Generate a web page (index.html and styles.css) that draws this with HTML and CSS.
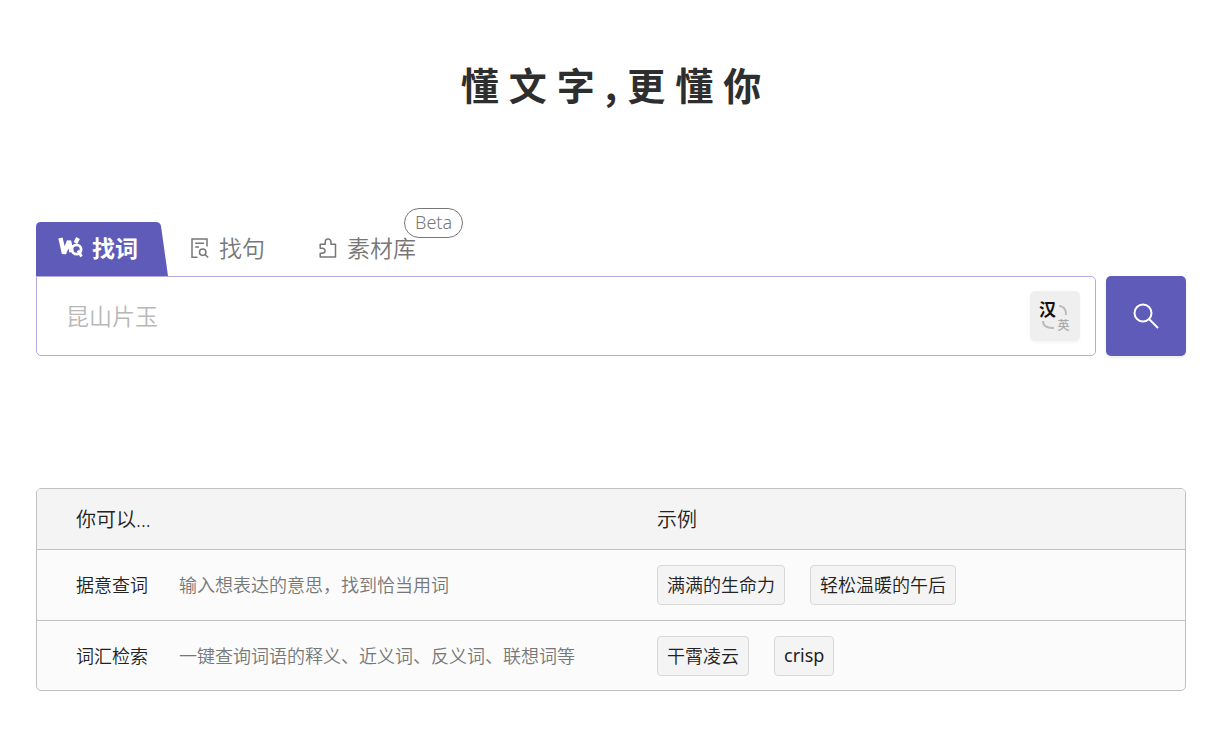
FILE: index.html
```html
<!DOCTYPE html>
<html lang="zh-CN">
<head>
<meta charset="utf-8">
<title>懂文字,更懂你</title>
<link rel="stylesheet" href="styles.css">
</head>
<body>
<main class="page">
  <h1 class="slogan">懂文字,更懂你</h1>

  <nav class="tabs">
    <button class="tab tab-active" type="button">
      <svg class="tab-shape" viewBox="0 0 132 54" preserveAspectRatio="none" aria-hidden="true"><path d="M0 54V5Q0 0 5 0H120Q124 0 125 4L132 54Z" fill="#5f5cb9"/></svg>
      <svg class="logo" viewBox="0 0 26 22" fill="none" stroke="#fff" aria-hidden="true">
        <path d="M2.500 1L6 16.500L11 4L13.500 15" stroke-width="4.400" stroke-linejoin="bevel"/>
        <path d="M20 1L17.500 6" stroke-width="4"/>
        <circle cx="18.500" cy="12.500" r="4.600" stroke-width="2.800"/>
        <path d="M20 13.500L23.500 19.500" stroke-width="2.800"/>
      </svg>
      <span>找词</span>
    </button>
    <button class="tab" type="button">
      <svg class="icon" viewBox="0 0 18 20" fill="none" stroke="#777" stroke-width="1.500" aria-hidden="true">
        <path d="M6.500 19.200H1V1H16V8.500M4.200 5.300H13M4.200 9H8"/>
        <circle cx="11.700" cy="14.200" r="3.200"/>
        <path d="M14 16.500L17.200 19.500"/>
      </svg>
      <span>找句</span>
    </button>
    <button class="tab tab-library" type="button">
      <svg class="icon" viewBox="0 0 18 20" fill="none" stroke="#777" stroke-width="1.500" stroke-linejoin="round" aria-hidden="true">
        <path d="M1.200 6.200H6.200V4.200C6.200 0 12 0 12 4.200V6.200H16.500V19H1.200V15.200H3.200C7 15.200 7 10.300 3.200 10.300H1.200Z"/>
      </svg>
      <span>素材库</span>
      <span class="badge">Beta</span>
    </button>
  </nav>

  <form class="search">
    <div class="field">
      <input class="query" type="text" placeholder="昆山片玉" aria-label="搜索">
      <button class="lang" type="button" aria-label="汉英切换">
        <span class="lang-zh">汉</span>
        <svg class="arc" viewBox="0 0 12 12" fill="none" stroke="#bbb" stroke-width="2" aria-hidden="true"><path d="M1 2Q8 2 8 11"/></svg>
        <svg class="arc" viewBox="0 0 12 12" fill="none" stroke="#bbb" stroke-width="2" aria-hidden="true"><path d="M1 1Q1 8 12 8"/></svg>
        <span class="lang-en">英</span>
      </button>
    </div>
    <button class="submit" type="submit" aria-label="搜索">
      <svg class="glass" viewBox="0 0 26 26" fill="none" stroke="#fff" stroke-width="2" aria-hidden="true"><circle cx="10" cy="10" r="8.500"/><path d="M16 16L25 25"/></svg>
    </button>
  </form>

  <table class="guide">
    <colgroup><col class="col-name"><col class="col-desc"><col></colgroup>
    <thead>
      <tr><th colspan="2" scope="col">你可以...</th><th scope="col">示例</th></tr>
    </thead>
    <tbody>
      <tr>
        <td class="name">据意查词</td>
        <td class="desc">输入想表达的意思，找到恰当用词</td>
        <td class="samples"><div class="chips"><button class="chip" type="button">满满的生命力</button><button class="chip" type="button">轻松温暖的午后</button></div></td>
      </tr>
      <tr>
        <td class="name">词汇检索</td>
        <td class="desc">一键查询词语的释义、近义词、反义词、联想词等</td>
        <td class="samples"><div class="chips"><button class="chip" type="button">干霄凌云</button><button class="chip chip-latin" type="button">crisp</button></div></td>
      </tr>
    </tbody>
  </table>
</main>
</body>
</html>
```
FILE: styles.css
```css
* { box-sizing: border-box; }
body {
  margin: 0;
  background: #fff;
  color: #222;
  font-family: "Noto Sans", "Noto Sans CJK SC", sans-serif;
  font-size: 18px;
}
button, input { font: inherit; color: inherit; margin: 0; padding: 0; border: 0; background: none; }
button { cursor: pointer; }
.page { padding: 56px 41px 58px 36px; }
.slogan {
  margin: 0;
  text-align: center;
  text-indent: 10px;
  font-family: "Noto Sans CJK SC", sans-serif;
  font-size: 38px;
  font-weight: 700;
  line-height: 56px;
  letter-spacing: 10px;
  color: #2e2e2e;
}
.tabs { display: flex; margin-top: 110px; height: 54px; }
.tab {
  position: relative;
  display: flex;
  align-items: center;
  gap: 10px;
  padding: 0 22px 2px;
  font-size: 23px;
  font-weight: 350;
  line-height: 32px;
  color: #777;
}
.tab-active { width: 132px; margin-right: 1px; color: #fff; font-weight: 700; gap: 8px; }
.tab-active span, .logo { position: relative; }
.tab-shape { position: absolute; left: 0; top: 0; width: 100%; height: 100%; }
.tab-library { margin-left: 10px; }
.logo { width: 26px; height: 22px; }
.icon { width: 18px; height: 20px; }
.badge {
  position: absolute;
  left: 100%;
  top: -14px;
  margin-left: -34px;
  height: 30px;
  padding: 0 10px;
  border: 1px solid #777;
  border-radius: 15px;
  background: #fff;
  font-size: 18px;
  line-height: 27px;
}
.search { display: flex; gap: 10px; }
.field {
  flex: 1;
  display: flex;
  align-items: center;
  height: 80px;
  padding: 0 15px 0 29px;
  border: 1px solid #b0acdf;
  border-radius: 0 5px 5px 5px;
}
.query { flex: 1; min-width: 0; height: 78px; font-size: 23px; font-weight: 350; outline: 0; }
.query::placeholder { color: #b8b8b8; opacity: 1; }
.lang {
  display: grid;
  grid-template-columns: 18px 12px;
  grid-template-rows: 18px 12px;
  gap: 1px;
  place-content: center;
  place-items: center;
  width: 50px;
  height: 50px;
  padding-right: 2px;
  border-radius: 5px;
  background: #efefef;
  box-shadow: 0 2px 3px #0000000a;
}
.lang-zh { font-size: 17px; line-height: 18px; font-weight: 700; color: #111; }
.lang-en { font-size: 12px; line-height: 12px; font-weight: 500; color: #aaa; }
.arc { width: 12px; height: 12px; }
.submit {
  display: grid;
  place-items: center;
  width: 80px;
  height: 80px;
  border-radius: 5px;
  background: #5f5cb9;
  box-shadow: 0 2px 3px #00000014;
}
.glass { width: 26px; height: 26px; }
.guide {
  width: 100%;
  margin-top: 132px;
  border: 1px solid #c1c1c1;
  border-radius: 5px;
  border-spacing: 0;
  overflow: hidden;
  table-layout: fixed;
  background: #fbfbfb;
  font-weight: 350;
}
.col-name { width: 142px; }
.col-desc { width: 478px; }
.guide th, .guide td { padding: 0; text-align: left; }
.guide th { height: 60px; padding-bottom: 2px; background: #f4f4f4; font-size: 20px; font-weight: inherit; }
.guide td { height: 70px; border-top: 1px solid #c1c1c1; }
.guide tbody tr:first-child td { height: 71px; }
.guide th:first-child, .guide .name { padding-left: 39px; }
.guide .name, .guide .desc { padding-bottom: 2px; }
.guide .desc { color: #777; }
.chips { display: flex; gap: 25px; }
.chip {
  height: 40px;
  padding: 0 9px 2px;
  border: 1px solid #d8d8d8;
  border-radius: 4px;
  background: #f4f4f4;
}
.chip-latin { font-weight: 400; }
```
